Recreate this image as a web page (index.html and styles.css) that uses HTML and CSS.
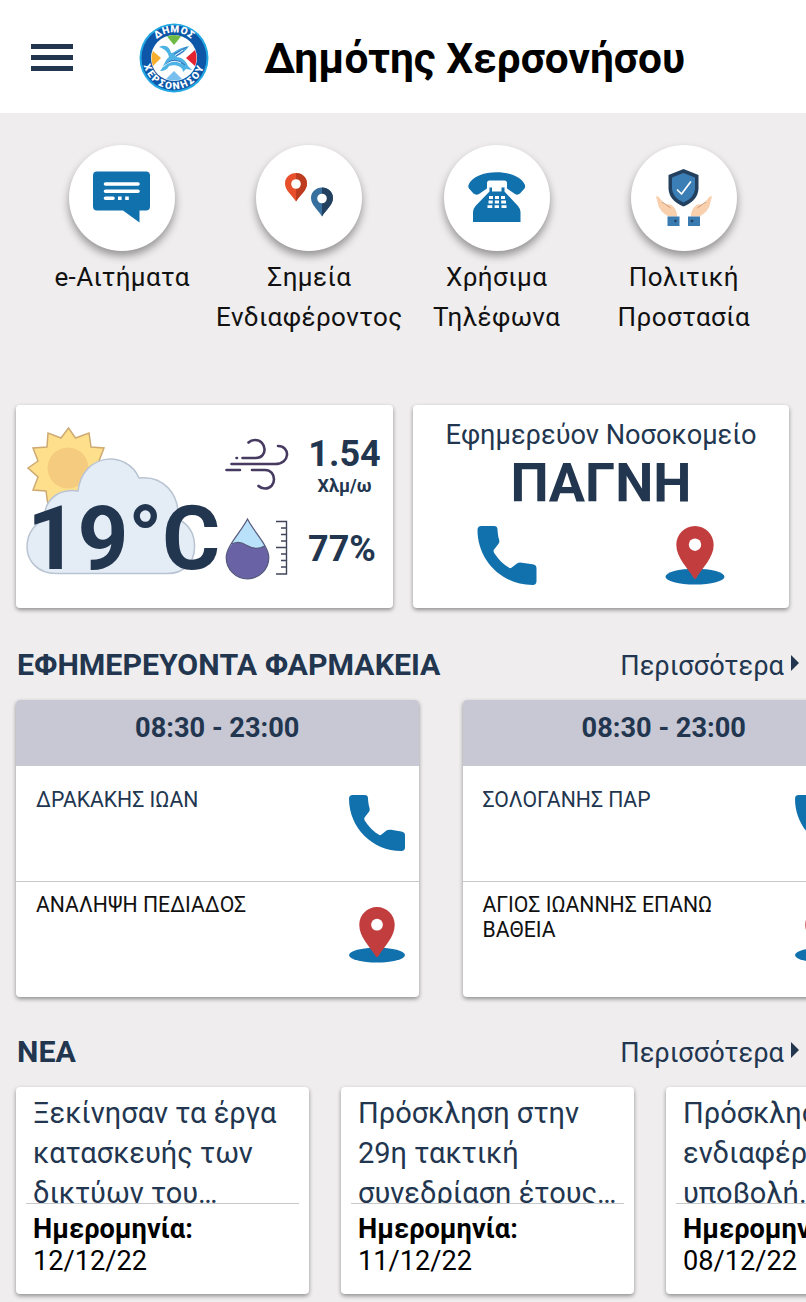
FILE: index.html
```html
<!DOCTYPE html>
<html lang="el">
<head>
  <meta charset="utf-8">
  <title>Δημότης Χερσονήσου</title>
  <link rel="stylesheet" href="styles.css">
</head>
<body>
  <!-- Shared icons -->
  <svg class="sprite" width="0" height="0">
    <symbol id="icon-phone" viewBox="0 0 60 60">
      <path fill="#1171ad" d="M4 0H17Q20 0 20.300 3C20.500 7 21 11 22 14C22.500 16 22 17.500 21 18.500L16.500 24.500Q16 26 17 27.500C21 34 26.500 39.500 33 43L34.500 42.500L40.500 37.800Q42.500 36.800 45 37.300L56 39Q60 39.500 60 43V56Q60 60 56 60C25 60 0 35 0 4Q0 0 4 0Z"/>
    </symbol>
    <symbol id="icon-place" viewBox="0 0 60 60">
      <ellipse fill="#1171ad" cx="30" cy="51.500" rx="30" ry="8"/>
      <path fill="#c23e3e" d="M30 0C40.500 0 49 8.500 49 19C49 32 38 42 31.500 52.500Q30 55 28.500 52.500C22 42 11 32 11 19C11 8.500 19.500 0 30 0Z"/>
      <circle fill="#fff" cx="30" cy="19" r="6.300"/>
    </symbol>
  </svg>

  <header class="header">
    <button class="menu-btn" aria-label="Μενού">
      <span></span>
      <span></span>
      <span></span>
    </button>
    <svg class="logo" viewBox="0 0 70 70">
      <defs>
        <path id="arc-top" d="M9.500 35A25.500 25.500 0 0 1 60.500 35"/>
        <path id="arc-bottom" d="M7.500 21A31 31 0 1 0 62.500 21"/>
      </defs>
      <circle cx="35" cy="35" r="34.500" fill="#23a8e3"/>
      <circle cx="35" cy="35" r="32.500" fill="#0d56a8"/>
      <circle cx="35" cy="35" r="23" fill="#fff"/>
      <path fill="#6dbb45" d="M28 13.500Q35 10.500 42 13.500L35 22Z"/>
      <path fill="#f5ae2d" d="M14 28L22 35L14 43Q11 35 14 28Z"/>
      <path fill="#e32330" d="M56 27L47 35L56 43Q59 35 56 27Z"/>
      <path fill="#79bfee" d="M27 56L35 48L43 56Q35 59 27 56Z"/>
      <path fill="#4db2e4" d="M20 24C26 21 31 24 32 30C36 30 38 25 50 23C48 27 44 30 37 34C43 34 47 38 49 43L53 47L47 46L44 49C44 43 36 41 30 43C29 46 25 48 21 48C25 44 25 38 30 34C29 29 26 26 20 24Z"/>
      <path fill="none" stroke="#3c6bb5" stroke-width="1" d="M35 31L48 24M37 33L45 28M27 41Q35 33 46 42"/>
      <path fill="none" stroke="#fff" stroke-width="0.800" d="M24 44Q33 35 42 40M36 32.500L44 27"/>
      <text class="logo-text"><textPath href="#arc-top" startOffset="50%" text-anchor="middle">ΔΗΜΟΣ</textPath></text>
      <text class="logo-text logo-text-bottom"><textPath href="#arc-bottom" startOffset="50%" text-anchor="middle">ΧΕΡΣΟΝΗΣΟΥ</textPath></text>
    </svg>
    <h1>Δημότης Χερσονήσου</h1>
  </header>

  <nav class="shortcuts">
    <a class="shortcut">
      <span class="circle">
        <svg width="106" height="106" viewBox="0 0 106 106">
          <path fill="#1171ad" d="M28 26.500H77Q81 26.500 81 30.500V61.500Q81 65.500 77 65.500H70.500V77.500L54 65.500H28Q24 65.500 24 61.500V30.500Q24 26.500 28 26.500Z"/>
          <path stroke="#fff" stroke-width="3.600" stroke-linecap="round" d="M36.500 39H69M36.500 46.300H69M36.500 53.300H44"/>
          <path fill="#fff" d="M49 51.500h3.600v3.600h-3.600zM56.200 51.500h3.600v3.600h-3.600z"/>
        </svg>
      </span>
      <span class="label">e-Αιτήματα</span>
    </a>
    <a class="shortcut">
      <span class="circle">
        <svg width="106" height="106" viewBox="0 0 106 106">
          <path fill="#e8502c" d="M40 28C46 28 51 32.500 51 38.500C51 45.500 44.500 49.500 40 56.500C35.500 49.500 29 45.500 29 38.500C29 32.500 34 28 40 28Z"/>
          <path fill="#bd3c20" d="M40 28C46 28 51 32.500 51 38.500C51 45.500 44.500 49.500 40 56.500Z"/>
          <circle fill="#fff" cx="40" cy="39" r="4.800"/>
          <path fill="#376f9f" d="M66 42.500C72 42.500 77 47 77 53C77 60 70.500 64 66 71.500C61.500 64 55 60 55 53C55 47 60 42.500 66 42.500Z"/>
          <path fill="#24405f" d="M66 42.500C72 42.500 77 47 77 53C77 60 70.500 64 66 71.500Z"/>
          <circle fill="#fff" cx="66" cy="53.500" r="4.800"/>
        </svg>
      </span>
      <span class="label">Σημεία Ενδιαφέροντος</span>
    </a>
    <a class="shortcut">
      <span class="circle">
        <svg width="106" height="106" viewBox="0 0 106 106">
          <path fill="#1171ad" d="M24.500 40C31 23 74 23 81 40Q81.500 42 80.500 43.500L76 48.500Q73.500 50.500 71 49L63 43.500V38Q63 35.500 60.500 35.500H45Q43 35.500 43 38V43.500L35 49Q32 50.500 29.500 48.500L25 43.500Q24 42 24.500 40Z"/>
          <path fill="#1171ad" d="M45.500 42.500H48V46.500H57.500V42.500H60.500V46.500L74 61Q76.500 64 76.500 67V77H29V67Q29 64 31.500 61L45.500 46.500Z"/>
          <path stroke="#fff" stroke-width="2.800" d="M45 52.500H49M51 52.500H55M57 52.500H61M44.500 57H48.700M50.800 57H55M57.200 57H62M43.500 61.700H48.300M50.600 61.700H55M57.500 61.700H62.500"/>
        </svg>
      </span>
      <span class="label">Χρήσιμα Τηλέφωνα</span>
    </a>
    <a class="shortcut">
      <span class="circle">
        <svg width="106" height="106" viewBox="0 0 106 106">
          <path fill="#24405f" d="M52.500 24L67.500 30V44Q66.500 56 52.500 61.500Q38.500 56 37.500 44V30Z"/>
          <path fill="#3b7db5" d="M52.500 28L64 32.500V44Q63 53 52.500 57.500Q42 53 41 44V32.500Z"/>
          <path fill="none" stroke="#fff" stroke-width="1.700" stroke-linecap="round" stroke-linejoin="round" d="M46.500 45L50.500 49L59.500 37"/>
          <path fill="#f8d0ae" d="M25 51.500Q27 50.500 29 53.500L34 59.500Q41 58 44.500 64.500Q46.500 68 46 71.500H37.500Q28 66 27 59Z"/>
          <path fill="#f8d0ae" d="M81 51.500Q79 50.500 77 53.500L72 59.500Q65 58 61.500 64.500Q59.500 68 60 71.500H68.500Q78 66 79 59Z"/>
          <path fill="none" stroke="#ce9b77" stroke-width="1" d="M31 57Q36 60 39.500 63M75 57Q70 60 66.500 63"/>
          <path fill="#397bb1" d="M36.500 71.500H48.500V81H36.500zM57 71.500H69V81H57z"/>
          <circle fill="#24405f" cx="44.500" cy="76" r="1.300"/>
          <circle fill="#24405f" cx="61" cy="76" r="1.300"/>
        </svg>
      </span>
      <span class="label">Πολιτική Προστασία</span>
    </a>
  </nav>

  <main>
    <div class="widgets">
      <div class="card weather">
        <div class="weather-now">
          <svg width="200" height="160" viewBox="20 422 200 160">
            <path fill="#fee08c" stroke="#ceaa73" stroke-width="1.500" d="M68.500 428L75.500 438L89 433L91 447L104 448L99 461L109 469L99 477L103 490L90 491L88 506L76 500L68 511L60 500L48 505L46 491L33 490L38 477L28 468L38 461L33 448L47 447L48 433L61 438Z"/>
            <circle fill="#f5cb80" cx="68" cy="468" r="20.500"/>
            <path fill="#e4ecf6" stroke="#b9c4d2" stroke-width="1.500" d="M56 573.500C37 573.500 27 560 27 547C27 532 36 523 45 519C43 501 58 488 78 491C83 452 127 450 139 478C162 475 180 493 178 519C190 525 195 536 194.500 548C194 563 184 573.500 167 573.500Z"/>
          </svg>
          <span class="temp">19°C</span>
        </div>
        <div class="weather-icons">
          <svg width="66" height="52" viewBox="0 0 66 52">
            <path fill="none" stroke="#463a60" stroke-width="2.600" stroke-linecap="round" d="M18.500 20H32C44 20 43 2 31 2Q27 2 24.500 4.500M12.500 20H13M7.500 26H51C66.500 26 66.500 8 54 8M2.500 32H16M28 32H41C53 32 53 50.500 41 50.500Q37 50.500 34.500 48"/>
          </svg>
          <svg width="66" height="62" viewBox="0 0 66 62">
            <path fill="#b9e1fa" d="M23.500 1C17 14 2.200 28 2.200 39.500A21.300 21.300 0 0 0 44.800 39.500C44.800 28 30 14 23.500 1Z"/>
            <path fill="#6963a5" d="M8 26Q15 22.500 22 27Q32 33 40.500 28C43 32 44.800 36 44.800 39.500A21.300 21.300 0 0 1 2.200 39.500C2.200 35 4.500 31 8 26Z"/>
            <path fill="none" stroke="#55597c" stroke-width="1.200" d="M8 26Q15 22.500 22 27Q32 33 40.500 28M23.500 1C17 14 2.200 28 2.200 39.500A21.300 21.300 0 0 0 44.800 39.500C44.800 28 30 14 23.500 1Z"/>
            <path fill="none" stroke="#40455b" stroke-width="1.400" d="M52 3.500H62.500V56H52M57 10H62.500M57 16.500H62.500M57 23H62.500M52 29.500H62.500M57 36H62.500M57 42.500H62.500M57 49H62.500"/>
          </svg>
        </div>
        <div class="weather-values">
          <span class="value">1.54</span>
          <span class="unit">Χλμ/ω</span>
          <span class="value humidity">77%</span>
        </div>
      </div>

      <div class="card hospital">
        <span class="hospital-label">Εφημερεύον Νοσοκομείο</span>
        <span class="hospital-name">ΠΑΓΝΗ</span>
        <div class="hospital-actions">
          <svg><use href="#icon-phone"/></svg>
          <svg><use href="#icon-place"/></svg>
        </div>
      </div>
    </div>

    <section>
      <div class="section-head">
        <h2>ΕΦΗΜΕΡΕΥΟΝΤΑ ΦΑΡΜΑΚΕΙΑ</h2>
        <a class="more">Περισσότερα</a>
      </div>
      <div class="pharmacies">
        <div class="card pharmacy">
          <div class="hours">08:30 - 23:00</div>
          <div class="row name">
            <span>ΔΡΑΚΑΚΗΣ ΙΩΑΝ</span>
            <svg><use href="#icon-phone"/></svg>
          </div>
          <div class="row address">
            <span>ΑΝΑΛΗΨΗ ΠΕΔΙΑΔΟΣ</span>
            <svg><use href="#icon-place"/></svg>
          </div>
        </div>
        <div class="card pharmacy">
          <div class="hours">08:30 - 23:00</div>
          <div class="row name">
            <span>ΣΟΛΟΓΑΝΗΣ ΠΑΡ</span>
            <svg><use href="#icon-phone"/></svg>
          </div>
          <div class="row address">
            <span>ΑΓΙΟΣ ΙΩΑΝΝΗΣ ΕΠΑΝΩ ΒΑΘΕΙΑ</span>
            <svg><use href="#icon-place"/></svg>
          </div>
        </div>
      </div>
    </section>

    <section>
      <div class="section-head news-head">
        <h2>ΝΕΑ</h2>
        <a class="more">Περισσότερα</a>
      </div>
      <div class="news">
        <div class="card article">
          <p class="title">Ξεκίνησαν τα έργα κατασκευής των δικτύων του…</p>
          <p class="date"><b>Ημερομηνία:</b><br>12/12/22</p>
        </div>
        <div class="card article">
          <p class="title">Πρόσκληση στην<br>29η τακτική συνεδρίαση έτους…</p>
          <p class="date"><b>Ημερομηνία:</b><br>11/12/22</p>
        </div>
        <div class="card article">
          <p class="title">Πρόσκληση<br>ενδιαφέροντος<br>υποβολή…</p>
          <p class="date"><b>Ημερομηνία:</b><br>08/12/22</p>
        </div>
      </div>
    </section>
  </main>
</body>
</html>
```
FILE: styles.css
```css
* {
  box-sizing: border-box;
}

body {
  margin: 0;
  width: 806px;
  height: 1302px;
  overflow: hidden;
  background: #efedee;
  color: #22364f;
  font-family: Roboto, "Noto Sans", sans-serif;
}

h1, h2, p {
  margin: 0;
}

svg {
  display: block;
  flex-shrink: 0;
}

.sprite {
  position: absolute;
}

/* Header */
.header {
  display: flex;
  align-items: center;
  height: 113px;
  padding: 0 0 0 31px;
  background: #fff;
}

.menu-btn {
  display: flex;
  flex-direction: column;
  gap: 6px;
  width: 42px;
  padding: 1px 0 0;
  border: none;
  background: none;
}

.menu-btn span {
  width: 42px;
  height: 5px;
  background: #22364f;
}

.logo {
  width: 70px;
  height: 70px;
  margin: 2px 55px 0 66px;
}

.logo-text {
  fill: #fff;
  font-family: Roboto, sans-serif;
  font-size: 10px;
  font-weight: 900;
  letter-spacing: 0.5px;
}

.logo-text-bottom {
  letter-spacing: 1.900px;
}

.header h1 {
  color: #000;
  font-size: 42.400px;
  line-height: 50px;
  font-weight: 700;
  white-space: nowrap;
  padding-top: 4px;
}

/* Shortcuts */
.shortcuts {
  display: grid;
  grid-template-columns: repeat(4, 1fr);
  height: 292px;
  padding: 32px 28.500px 0;
}

.shortcut {
  display: flex;
  flex-direction: column;
  align-items: center;
}

.circle {
  width: 106px;
  height: 106px;
  border-radius: 50%;
  background: #fff;
  box-shadow: 0 5px 9px rgba(0,0,0,0.38);
}

.label {
  margin-top: 6px;
  color: #111;
  font-size: 26px;
  line-height: 40px;
  letter-spacing: 0.420px;
  text-align: center;
}

/* Cards */
.card {
  background: #fff;
  border-radius: 4px;
  box-shadow: 0 2px 4px rgba(0,0,0,0.4);
}

.widgets {
  display: grid;
  grid-template-columns: 377px 376px;
  gap: 20px;
  height: 203px;
  padding-left: 16px;
}

.weather {
  display: flex;
}

.weather-now {
  display: grid;
  width: 208px;
  padding: 17px 0 0 4px;
}

.weather-now svg,
.temp {
  grid-area: 1 / 1;
}

.temp {
  padding: 64px 0 0 7px;
  font-size: 89px;
  line-height: 106px;
  font-weight: 700;
  letter-spacing: -0.600px;
  white-space: nowrap;
}

.weather-icons {
  display: flex;
  flex-direction: column;
  gap: 28px;
  width: 66px;
  padding-top: 33px;
}

.weather-values {
  display: flex;
  flex-direction: column;
  align-items: center;
  width: 103px;
  padding: 28px 0 0 6px;
  font-weight: 700;
}

.value {
  font-size: 36px;
  line-height: 42px;
}

.humidity {
  padding-right: 5px;
}

.unit {
  margin-bottom: 32px;
  font-size: 18px;
  line-height: 21px;
}

.hospital {
  display: flex;
  flex-direction: column;
  align-items: center;
}

.hospital-label {
  margin-top: 14px;
  font-size: 27.200px;
  line-height: 32px;
}

.hospital-name {
  font-size: 54px;
  line-height: 64px;
  font-weight: 700;
}

.hospital-actions {
  display: flex;
  gap: 128px;
  margin-top: 11px;
}

.hospital-actions svg {
  width: 60px;
  height: 59px;
}

/* Section headings */
.section-head {
  display: flex;
  justify-content: space-between;
  height: 92px;
  padding: 39px 7px 0 17px;
}

.section-head h2 {
  font-size: 30.300px;
  line-height: 36px;
  font-weight: 700;
}

.more {
  display: flex;
  gap: 7px;
  font-size: 27.200px;
  line-height: 38px;
}

.more::after {
  content: "";
  height: 0;
  margin-top: 8px;
  border: solid transparent;
  border-width: 8px 0 8px 8px;
  border-left-color: #22364f;
}

.news-head {
  height: 90px;
  padding-top: 37px;
}

/* Pharmacies */
.pharmacies,
.news {
  display: flex;
  padding-left: 16px;
}

.pharmacies {
  gap: 44px;
}

.pharmacy {
  flex: 0 0 402.500px;
  height: 297px;
  overflow: hidden;
}

.hours {
  height: 66px;
  padding-top: 12px;
  background: #c8c7d4;
  font-size: 27.200px;
  line-height: 32px;
  font-weight: 700;
  text-align: center;
}

.row {
  display: flex;
  justify-content: space-between;
  padding: 21px 14px 0 20px;
  font-size: 21.200px;
  line-height: 25px;
}

.row svg {
  width: 56px;
  height: 56px;
}

.name {
  height: 116px;
  border-bottom: 1px solid #c6c8cc;
}

.name svg {
  margin-top: 8px;
}

.address {
  padding-top: 10px;
  color: #111;
}

.address span {
  width: 250px;
}

.address svg {
  margin-top: 15px;
}

/* News */
.news {
  gap: 32px;
}

.article {
  flex: 0 0 293px;
  height: 207px;
  padding: 6px 10px 0;
}

.title {
  height: 111px;
  padding-left: 7px;
  overflow: hidden;
  border-bottom: 1px solid #c6c8cc;
  font-size: 29px;
  line-height: 40px;
}

.date {
  padding: 9px 0 0 7px;
  color: #000;
  font-size: 27.200px;
  line-height: 32px;
}
```
